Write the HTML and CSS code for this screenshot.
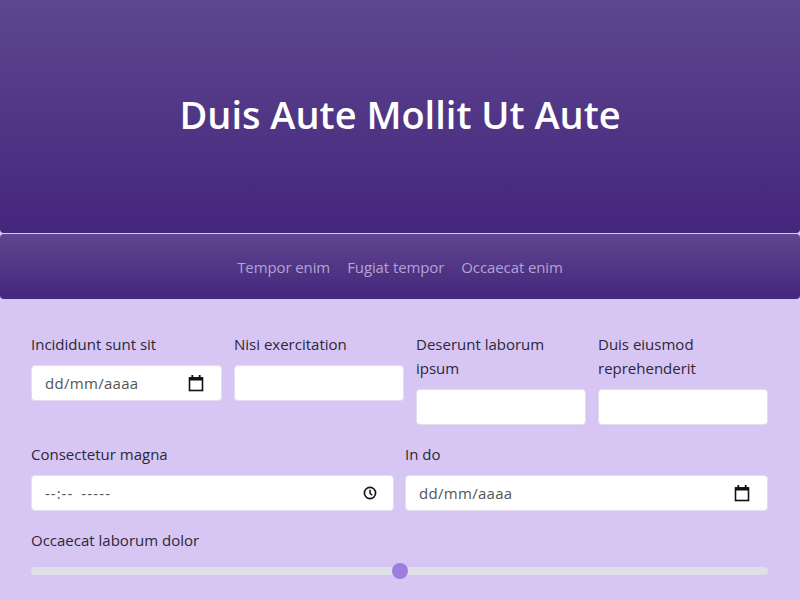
FILE: index.html
```html
<!DOCTYPE html>
<html lang="es">
<head>
<meta charset="utf-8">
<title>Duis Aute Mollit Ut Aute</title>
<link rel="stylesheet" href="styles.css">
</head>
<body>
<header class="hero">
  <h1 class="hero-title">Duis Aute Mollit Ut Aute</h1>
</header>
<nav class="nav">
  <a class="nav-link" href="#">Tempor enim</a>
  <a class="nav-link" href="#">Fugiat tempor</a>
  <a class="nav-link" href="#">Occaecat enim</a>
</nav>
<main class="form">
  <div class="row row-4">
    <div class="field">
      <label class="label">Incididunt sunt sit</label>
      <div class="input">
        <span class="placeholder">dd/mm/aaaa</span>
        <svg class="icon cal" width="16" height="18" viewBox="0 0 16 18"><rect x="1.5" y="4" width="13" height="12.5" fill="none" stroke="#111" stroke-width="1.6"/><rect x="1" y="3.3" width="14" height="3.2" fill="#111"/><rect x="3.4" y="1" width="1.8" height="3" fill="#111"/><rect x="10.8" y="1" width="1.8" height="3" fill="#111"/></svg>
      </div>
    </div>
    <div class="field">
      <label class="label">Nisi exercitation</label>
      <div class="input"></div>
    </div>
    <div class="field">
      <label class="label">Deserunt laborum ipsum</label>
      <div class="input"></div>
    </div>
    <div class="field">
      <label class="label">Duis eiusmod reprehenderit</label>
      <div class="input"></div>
    </div>
  </div>
  <div class="row row-2">
    <div class="field">
      <label class="label">Consectetur magna</label>
      <div class="input">
        <span class="placeholder"><span class="time-hm">--:--</span><span class="time-ampm">-----</span></span>
        <svg class="icon clock" width="14" height="14" viewBox="0 0 14 14"><circle cx="7" cy="7" r="5.6" fill="none" stroke="#111" stroke-width="1.6"/><path d="M7 3.8V7.2L9.2 9.2" fill="none" stroke="#111" stroke-width="1.5"/></svg>
      </div>
    </div>
    <div class="field">
      <label class="label">In do</label>
      <div class="input">
        <span class="placeholder">dd/mm/aaaa</span>
        <svg class="icon cal" width="16" height="18" viewBox="0 0 16 18"><rect x="1.5" y="4" width="13" height="12.5" fill="none" stroke="#111" stroke-width="1.6"/><rect x="1" y="3.3" width="14" height="3.2" fill="#111"/><rect x="3.4" y="1" width="1.8" height="3" fill="#111"/><rect x="10.8" y="1" width="1.8" height="3" fill="#111"/></svg>
      </div>
    </div>
  </div>
  <div class="field">
    <label class="label">Occaecat laborum dolor</label>
    <div class="range">
      <div class="range-track"></div>
      <div class="range-thumb" style="left: 50%"></div>
    </div>
  </div>
</main>
</body>
</html>
```
FILE: styles.css
```css
* { box-sizing: border-box; }
body {
  margin: 0;
  background: #d7c6f3;
  font-family: "Open Sans", "Noto Sans", sans-serif;
  color: #2b2838;
}
.hero {
  height: 233px;
  display: flex;
  align-items: center;
  justify-content: center;
  background: linear-gradient(#5e4690, #44267c);
  border-radius: 0 0 4px 4px;
}
.hero-title {
  margin: 0 0 5px;
  color: #fff;
  font-size: 38px;
  font-weight: 600;
  letter-spacing: 0;
}
.nav {
  margin-top: 1px;
  height: 65px;
  display: flex;
  align-items: center;
  justify-content: center;
  gap: 17px;
  background: linear-gradient(#5e4690, #44267c);
  border-radius: 4px;
}
.nav-link {
  color: #b3a3d6;
  text-decoration: none;
  font-size: 15px;
  letter-spacing: -0.1px;
}
.form {
  padding: 33px 32px 0 31px;
  display: flex;
  flex-direction: column;
  gap: 17px;
}
.row {
  display: grid;
  align-items: start;
}
.row-4 {
  grid-template-columns: 191px 170px 170px 170px;
  column-gap: 12px;
}
.row-2 {
  grid-template-columns: 1fr 1fr;
  column-gap: 11px;
}
.field {
  display: flex;
  flex-direction: column;
}
.label {
  font-size: 15px;
  line-height: 24px;
  margin-bottom: 9px;
  color: #2b2838;
}
.input {
  height: 36px;
  background: #fff;
  border: 1px solid #e4dcef;
  border-radius: 4px;
  display: flex;
  align-items: center;
  justify-content: space-between;
  padding: 0 17px 0 13px;
}
.placeholder {
  font-size: 15px;
  color: #555;
  letter-spacing: 0.3px;
}
.time-hm { letter-spacing: 1px; }
.time-ampm { margin-left: 8px; letter-spacing: 1.2px; }
.icon { display: block; }
.clock { margin-right: -1px; }
.range {
  position: relative;
  height: 16px;
  margin-top: 2px;
  display: flex;
  align-items: center;
}
.range-track {
  width: 100%;
  height: 8px;
  background: #dee0e6;
  border-radius: 4px;
}
.range-thumb {
  position: absolute;
  top: 0;
  width: 16px;
  height: 16px;
  margin-left: -8px;
  border-radius: 50%;
  background: #9d7ee0;
}
```
